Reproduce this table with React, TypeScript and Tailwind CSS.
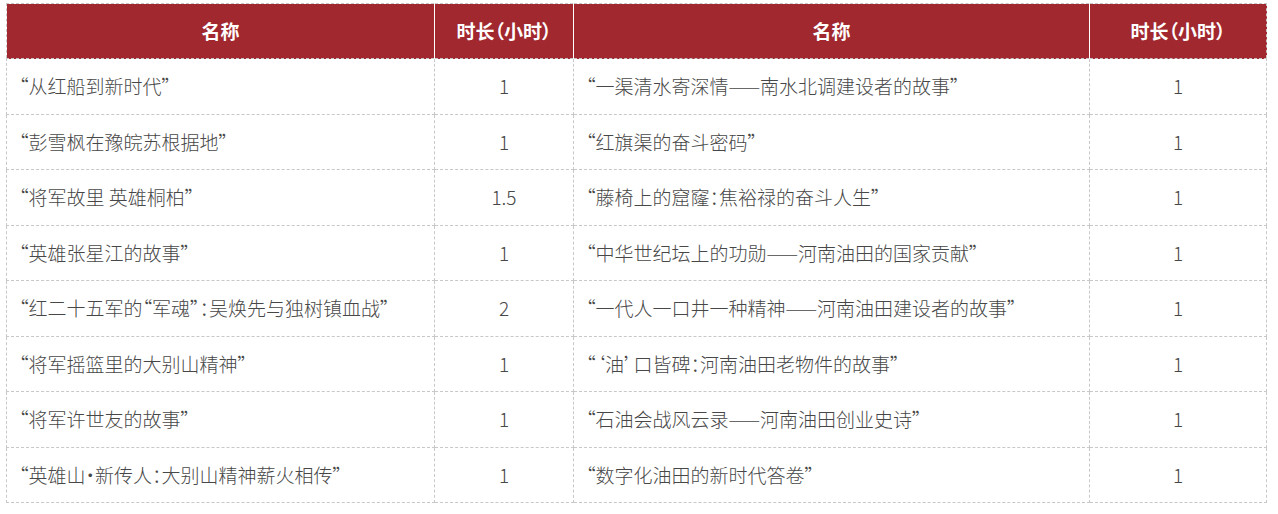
import React from "react";

const rows: [string, string, string, string][] = [
  ["“从红船到新时代”", "1", "“一渠清水寄深情——南水北调建设者的故事”", "1"],
  ["“彭雪枫在豫皖苏根据地”", "1", "“红旗渠的奋斗密码”", "1"],
  ["“将军故里 英雄桐柏”", "1.5", "“藤椅上的窟窿：焦裕禄的奋斗人生”", "1"],
  ["“英雄张星江的故事”", "1", "“中华世纪坛上的功勋——河南油田的国家贡献”", "1"],
  ["“红二十五军的“军魂”：吴焕先与独树镇血战”", "2", "“一代人一口井一种精神——河南油田建设者的故事”", "1"],
  ["“将军摇篮里的大别山精神”", "1", "“‘油’口皆碑：河南油田老物件的故事”", "1"],
  ["“将军许世友的故事”", "1", "“石油会战风云录——河南油田创业史诗”", "1"],
  ["“英雄山·新传人：大别山精神薪火相传”", "1", "“数字化油田的新时代答卷”", "1"],
];

export default function App() {
  return (
    <div className="w-[1278px] h-[514px] bg-white pt-[3px] pl-[6px] font-['Noto_Sans_CJK_SC','Noto_Sans',sans-serif] [font-feature-settings:'palt']">
      <table className="border-collapse table-fixed w-[1260px] border border-dashed border-[#c8c8c8]">
        <colgroup>
          <col className="w-[428px]" />
          <col className="w-[139px]" />
          <col className="w-[516px]" />
          <col className="w-[177px]" />
        </colgroup>
        <thead>
          <tr className="h-[55px] bg-[#a1282e] text-white text-[19px] font-bold">
            <th className="border-r border-white font-bold">名称</th>
            <th className="border-r border-white font-bold">时长（小时）</th>
            <th className="border-r border-white font-bold">名称</th>
            <th className="font-bold">时长（小时）</th>
          </tr>
        </thead>
        <tbody>
          {rows.map((r, i) => (
            <tr key={i} className="h-[55.5px] text-[19px] text-[#474747] font-extralight">
              <td className="border border-dashed border-[#c8c8c8] pl-[12px] whitespace-nowrap">{r[0]}</td>
              <td className="border border-dashed border-[#c8c8c8] text-center">{r[1]}</td>
              <td className="border border-dashed border-[#c8c8c8] pl-[12px] whitespace-nowrap">{r[2]}</td>
              <td className="border border-dashed border-[#c8c8c8] text-center">{r[3]}</td>
            </tr>
          ))}
        </tbody>
      </table>
    </div>
  );
}
